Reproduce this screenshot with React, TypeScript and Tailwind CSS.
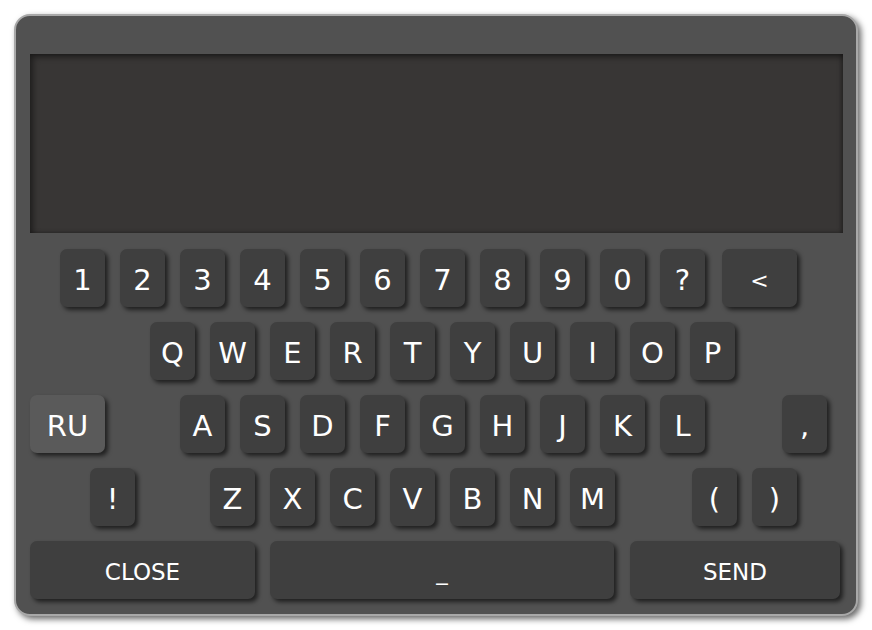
import React from "react";

const font = { fontFamily: '"Comic Sans MS", "DejaVu Sans", sans-serif' };

interface KeyProps {
  label: string;
  w?: string;
  light?: boolean;
  size?: string;
  className?: string;
}

function Key({ label, w = "w-[45px]", light, size = "text-[29px]", className = "" }: KeyProps) {
  return (
    <button
      type="button"
      className={`${w} h-[58px] shrink-0 rounded-[7px] flex items-center justify-center text-white shadow-[3px_3px_4px_rgba(0,0,0,0.6)] ${
        light ? "bg-[#5a5a5a]" : "bg-[#3f3f3f]"
      } ${size} ${className}`}
    >
      <span className="leading-none pt-[5px]">{label}</span>
    </button>
  );
}

const row1 = ["1", "2", "3", "4", "5", "6", "7", "8", "9", "0", "?"];
const row2 = ["Q", "W", "E", "R", "T", "Y", "U", "I", "O", "P"];
const row3 = ["A", "S", "D", "F", "G", "H", "J", "K", "L"];
const row4 = ["Z", "X", "C", "V", "B", "N", "M"];

export default function App() {
  return (
    <div className="w-[872px] h-[630px] bg-white pt-[14px] pl-[14px]" style={font}>
      <div className="w-[844px] h-[602px] rounded-[16px] border-2 border-[#a8a8a8] bg-[#515151] pt-[38px] pl-[14px] pr-[13px] shadow-[3px_3px_6px_rgba(0,0,0,0.6)]">
        <div className="h-[179px] bg-[#383635] shadow-[inset_3px_3px_6px_rgba(0,0,0,0.45),inset_-2px_0_4px_rgba(0,0,0,0.3)]" />

        <div className="mt-[16px] flex flex-col gap-[15px]">
          <div className="flex gap-[15px] pl-[30px]">
            {row1.map((k) => (
              <Key key={k} label={k} />
            ))}
            <Key label="<" w="w-[75px]" size="text-[22px]" className="ml-[2px]" />
          </div>

          <div className="flex gap-[15px] pl-[120px]">
            {row2.map((k) => (
              <Key key={k} label={k} />
            ))}
          </div>

          <div className="flex gap-[15px]">
            <Key label="RU" w="w-[75px]" light className="mr-[60px]" />
            {row3.map((k) => (
              <Key key={k} label={k} />
            ))}
            <Key label="," className="ml-[62px]" />
          </div>

          <div className="flex gap-[15px] pl-[60px]">
            <Key label="!" className="mr-[60px]" />
            {row4.map((k) => (
              <Key key={k} label={k} />
            ))}
            <Key label="(" className="ml-[62px]" />
            <Key label=")" />
          </div>

          <div className="flex">
            <Key label="CLOSE" w="w-[225px]" size="text-[23px]" />
            <Key label="_" w="w-[344px]" size="text-[23px]" className="ml-[15px]" />
            <Key label="SEND" w="w-[210px]" size="text-[23px]" className="ml-[16px]" />
          </div>
        </div>
      </div>
    </div>
  );
}
